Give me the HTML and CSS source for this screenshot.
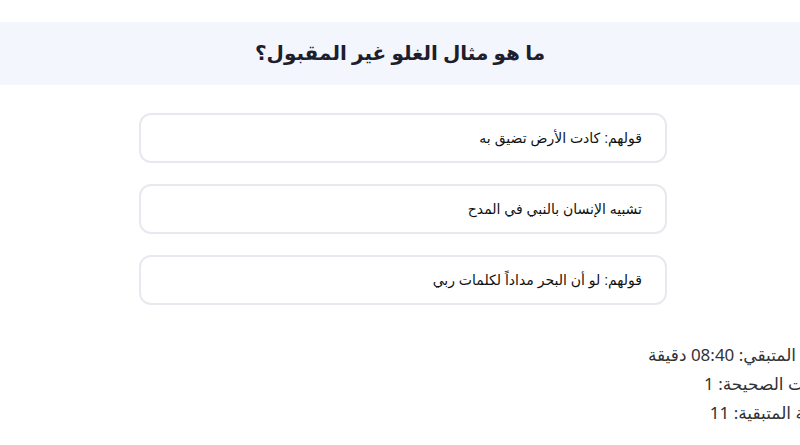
FILE: index.html
```html
<!DOCTYPE html>
<html lang="ar" dir="rtl">
<head>
    <meta charset="UTF-8">
    <meta name="viewport" content="width=device-width, initial-scale=1.0">
    <title>اختبار</title>
    <link rel="stylesheet" href="styles.css">
</head>
<body>
    <!-- السؤال -->
    <div class="question-bar">
        <h2 class="question">ما هو مثال الغلو غير المقبول؟</h2>
    </div>

    <!-- الخيارات -->
    <div class="options">
        <button class="option">قولهم: كادت الأرض تضيق به</button>
        <button class="option">تشبيه الإنسان بالنبي في المدح</button>
        <button class="option">قولهم: لو أن البحر مداداً لكلمات ربي</button>
    </div>

    <!-- معلومات الاختبار -->
    <div class="stats">
        <p>الوقت المتبقي: 08:40 دقيقة</p>
        <p>الإجابات الصحيحة: 1</p>
        <p>الأسئلة المتبقية: 11</p>
    </div>
</body>
</html>
```

FILE: styles.css
```css
* {
    margin: 0;
    padding: 0;
    box-sizing: border-box;
}
html, body {
    overflow: hidden;
}
body {
    font-family: "Noto Sans", "DejaVu Sans", sans-serif;
    background-color: #ffffff;
    color: #222;
    padding-top: 22px;
}
.question-bar {
    background-color: #f3f6fc;
    height: 63px;
    display: flex;
    align-items: center;
    justify-content: center;
}
.question {
    font-size: 20px;
    font-weight: bold;
    color: #1e1e2c;
    margin-top: -2px;
}
.options {
    width: 528px;
    margin: 28px 133px 0 auto;
    display: flex;
    flex-direction: column;
    gap: 21px;
}
.option {
    height: 50px;
    background-color: #fff;
    border: 2px solid #e7e9ee;
    border-radius: 12px;
    padding: 0 23px;
    text-align: right;
    font-family: "Liberation Sans", "DejaVu Sans", sans-serif;
    font-size: 14px;
    color: #111;
    cursor: pointer;
}
.stats {
    margin: 35px -44px 0 0;
    font-size: 17px;
    color: #333;
    line-height: 29px;
}
```
